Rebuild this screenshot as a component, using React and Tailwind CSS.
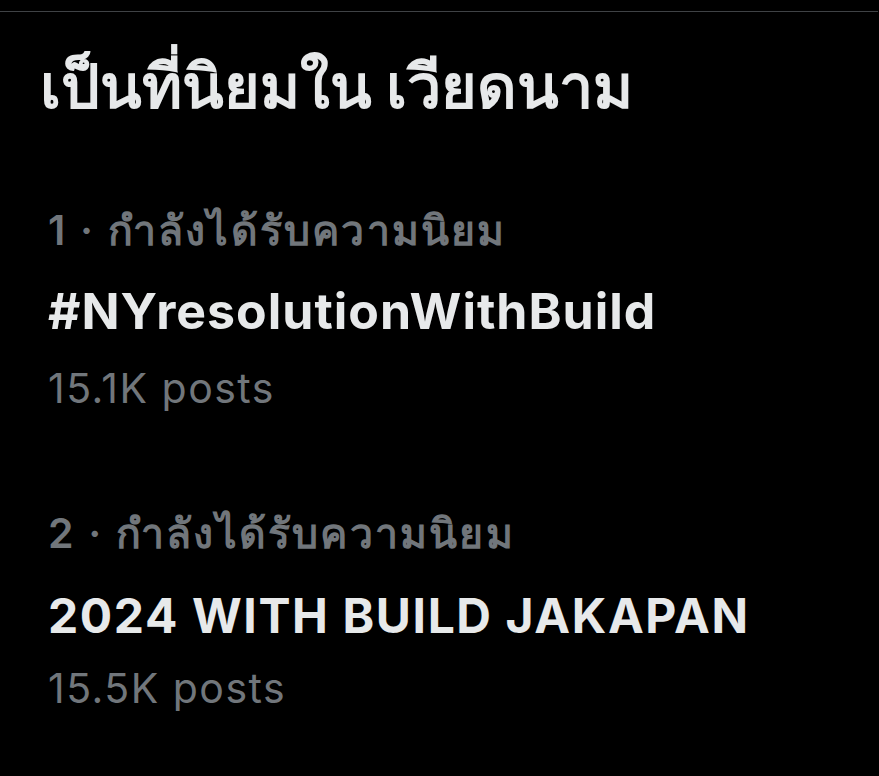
export default function App() {
  const trends = [
    {
      rank: 1,
      label: 'กำลังได้รับความนิยม',
      name: '#NYresolutionWithBuild',
      posts: '15.1K posts',
      nameClass: 'mt-[37px] text-[50px] tracking-[1px]',
      postsClass: 'mt-[33px]',
    },
    {
      rank: 2,
      label: 'กำลังได้รับความนิยม',
      name: '2024 WITH BUILD JAKAPAN',
      posts: '15.5K posts',
      nameClass: 'mt-[39px] text-[48px] tracking-[1.6px]',
      postsClass: 'mt-[28px]',
    },
  ];

  return (
    <div className="w-[879px] h-[776px] bg-black overflow-hidden" style={{ fontFamily: 'Inter, "Noto Sans", sans-serif' }}>
      <div className="pt-[11px]">
        <div className="h-px w-[878px] bg-[#3f4245]" />
      </div>

      {/* header */}
      <h1 className="pl-[40px] pt-[44px] text-[61px] leading-[60px] font-bold text-[#e7e9ea]">
        เป็นที่นิยมใน เวียดนาม
      </h1>

      <div className="mt-[92px] flex flex-col gap-[101px] pl-[48px]">
        {trends.map((t) => (
          <div key={t.rank} className="flex flex-col">
            <div className="text-[41px] leading-[44px] font-semibold text-[#71767b] tracking-[2.2px]">
              {t.rank} · {t.label}
            </div>
            <div className={`${t.nameClass} leading-[44px] font-bold text-[#e7e9ea]`}>
              {t.name}
            </div>
            <div className={`${t.postsClass} text-[41px] leading-[44px] text-[#71767b] tracking-[1.5px]`}>
              {t.posts}
            </div>
          </div>
        ))}
      </div>
    </div>
  );
}
